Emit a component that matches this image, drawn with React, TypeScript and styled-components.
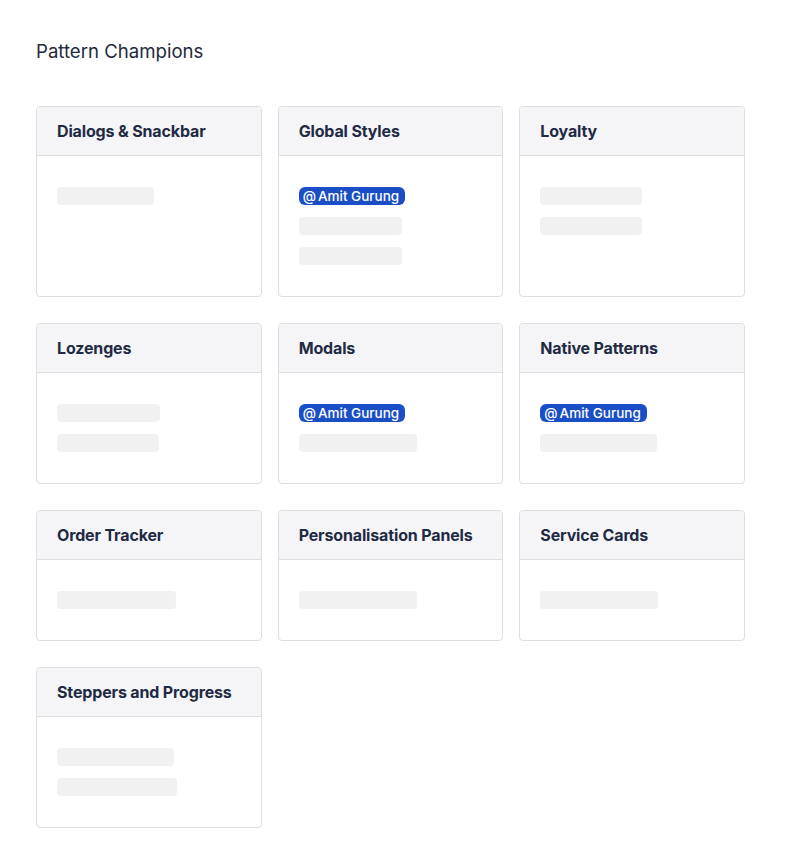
import React from "react";
import styled, { createGlobalStyle } from "styled-components";

const Global = createGlobalStyle`
  html, body { margin: 0; padding: 0; background: #ffffff; }
  body { font-family: Inter, "Noto Sans", sans-serif; color: #1d2939; }
`;

const Page = styled.div`
  padding: 39px 41px 40px 36px;
`;

const Title = styled.h2`
  margin: 0 0 43px;
  font-size: 18.6px;
  line-height: 24px;
  font-weight: 400;
  color: #1f2a3c;
  letter-spacing: 0;
`;

const Grid = styled.div`
  display: grid;
  grid-template-columns: repeat(3, 1fr);
  column-gap: 16px;
  row-gap: 26px;
  width: 709px;
`;

const Card = styled.div`
  border: 1px solid #dcdee2;
  border-radius: 4px;
  background: #fff;
  display: flex;
  flex-direction: column;
  overflow: hidden;
`;

const CardHeader = styled.div`
  background: #f5f5f7;
  border-bottom: 1px solid #dcdee2;
  height: 48px;
  display: flex;
  align-items: center;
  padding: 0 20px;
  font-size: 16px;
  font-weight: 700;
  color: #1f2a44;
  letter-spacing: -0.15px;
  white-space: nowrap;
`;

const CardBody = styled.div`
  flex: 1;
  display: flex;
  flex-direction: column;
  gap: 12px;
  padding: 31px 20px 31px;
  align-items: flex-start;
`;

const Skeleton = styled.div<{ $w: number }>`
  width: ${(p) => p.$w}px;
  height: 18px;
  border-radius: 4px;
  background: #f1f1f2;
`;

const Badge = styled.span`
  display: inline-flex;
  align-items: center;
  height: 18px;
  padding: 0 6px 0 4px;
  border-radius: 6px;
  background: #1a4ec6;
  color: #ffffff;
  font-size: 13.5px;
  font-weight: 500;
  line-height: 18px;
  white-space: nowrap;
`;

const At = styled.span`
  margin-right: 2px;
`;

type Item = { type: "badge" } | { type: "skel"; w: number };

const cards: { title: string; items: Item[] }[] = [
  { title: "Dialogs & Snackbar", items: [{ type: "skel", w: 97 }] },
  {
    title: "Global Styles",
    items: [{ type: "badge" }, { type: "skel", w: 103 }, { type: "skel", w: 103 }],
  },
  { title: "Loyalty", items: [{ type: "skel", w: 102 }, { type: "skel", w: 102 }] },
  { title: "Lozenges", items: [{ type: "skel", w: 103 }, { type: "skel", w: 102 }] },
  { title: "Modals", items: [{ type: "badge" }, { type: "skel", w: 118 }] },
  { title: "Native Patterns", items: [{ type: "badge" }, { type: "skel", w: 117 }] },
  { title: "Order Tracker", items: [{ type: "skel", w: 119 }] },
  { title: "Personalisation Panels", items: [{ type: "skel", w: 118 }] },
  { title: "Service Cards", items: [{ type: "skel", w: 118 }] },
  { title: "Steppers and Progress", items: [{ type: "skel", w: 117 }, { type: "skel", w: 120 }] },
];

export default function App() {
  return (
    <Page>
      <Global />
      <Title>Pattern Champions</Title>
      <Grid>
        {cards.map((c) => (
          <Card key={c.title}>
            <CardHeader>{c.title}</CardHeader>
            <CardBody>
              {c.items.map((it, i) =>
                it.type === "badge" ? (
                  <Badge key={i}>
                    <At>@</At>Amit Gurung
                  </Badge>
                ) : (
                  <Skeleton key={i} $w={it.w} />
                )
              )}
            </CardBody>
          </Card>
        ))}
      </Grid>
    </Page>
  );
}
